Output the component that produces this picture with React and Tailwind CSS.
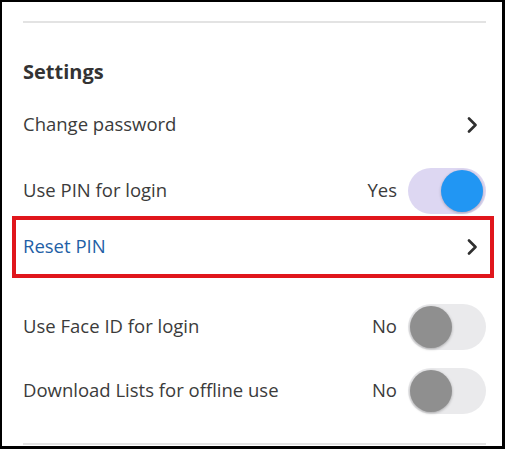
import React from 'react';

const Chevron = () => (
  <svg width="12" height="16" viewBox="0 0 12 16" className="mr-[8px]">
    <path d="M3 1.5 L9.5 8 L3 14.5" fill="none" stroke="#2f2f2f" strokeWidth="2.6" strokeLinecap="round" strokeLinejoin="round" />
  </svg>
);

const Toggle = ({ on }) => (
  <div
    className={
      on
        ? 'w-[78px] h-[46px] rounded-full bg-[#ddd7f2] flex items-center justify-end pr-[3px]'
        : 'w-[78px] h-[46px] rounded-full bg-[#eaeaec] flex items-center pl-[2px]'
    }
  >
    <div
      className={
        on
          ? 'w-[42px] h-[42px] rounded-full bg-[#2196f3] shadow-[0_1px_3px_rgba(0,0,0,0.25)]'
          : 'w-[42px] h-[42px] rounded-full bg-[#8f8f8f] shadow-[0_1px_3px_rgba(0,0,0,0.3)]'
      }
    />
  </div>
);

const ToggleRow = ({ label, value, on, className }) => (
  <div className={`flex items-center justify-between ${className}`}>
    <span className="pb-[3px]">{label}</span>
    <div className="flex items-center gap-[11px]">
      <span className="pb-[3px]">{value}</span>
      <Toggle on={on} />
    </div>
  </div>
);

const App = () => {
  return (
    <div
      className="w-[505px] h-[449px] bg-white border-black border-l-2 border-t-2 border-r-[3px] border-b-[3px] overflow-hidden text-[18.5px] text-[#3b3b3b]"
      style={{ fontFamily: '"Open Sans", "Liberation Sans", sans-serif' }}
    >
      <div className="pl-[21px] pr-[16px] pt-[19px]">
        <div className="h-[2px] bg-[#e3e3e3]" />

        <div className="mt-[31px] h-[38px] flex items-center">
          <h2 className="text-[20px] font-bold text-[#333] pb-[3px]">Settings</h2>
        </div>

        <div className="h-[66px] flex items-center justify-between">
          <span className="pb-[3px]">Change password</span>
          <Chevron />
        </div>

        <ToggleRow label="Use PIN for login" value="Yes" on className="mt-[8px] h-[50px]" />

        <div className="ml-[-11px] mr-[-8px] h-[62px] border-4 border-[#e0161c] flex items-center justify-between pl-[7px] pr-[4px]">
          <span className="text-[#1f5fa6] pb-[3px]">Reset PIN</span>
          <Chevron />
        </div>

        <ToggleRow label="Use Face ID for login" value="No" className="mt-[17px] h-[64px]" />
        <ToggleRow label="Download Lists for offline use" value="No" className="h-[64px]" />

        <div className="mt-[20px] h-[2px] bg-[#e3e3e3]" />
      </div>
    </div>
  );
};

export default App;
